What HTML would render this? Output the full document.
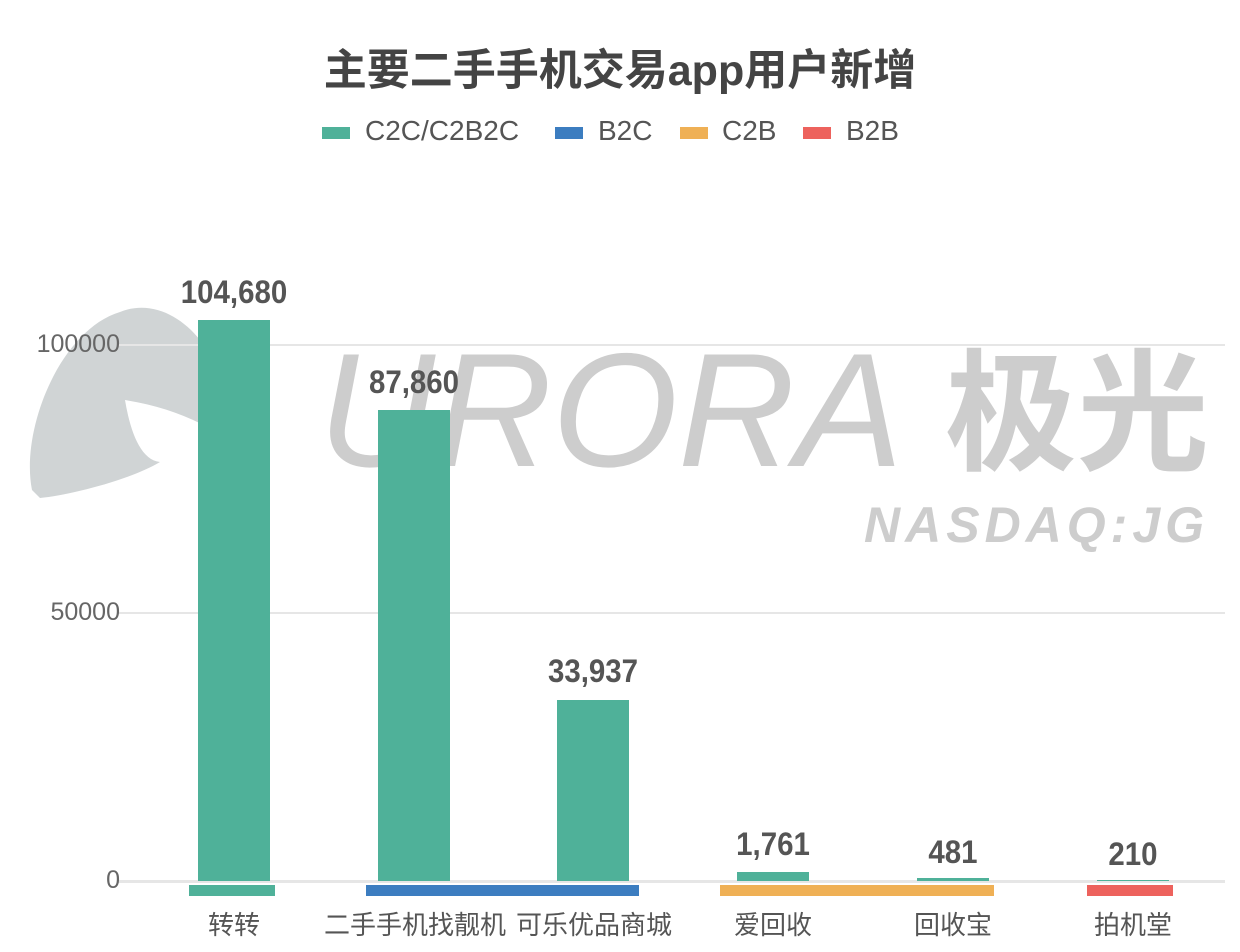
<!DOCTYPE html>
<html><head><meta charset="utf-8"><style>
body{margin:0;width:1240px;height:952px;background:#fff;position:relative;overflow:hidden;font-family:"Liberation Sans","Noto Sans CJK SC",sans-serif}
.a{position:absolute}
.bar{position:absolute;background:#4fb199;width:72px}
.v{position:absolute;width:160px;text-align:center;font-weight:bold;font-size:32px;color:#555;transform:scaleX(0.92)}
.yl{position:absolute;right:1120px;font-size:25px;color:#666}
.g{position:absolute;left:118px;width:1107px;height:2px;background:#e6e6e6}
.cl{position:absolute;top:905px;font-size:26px;color:#555;width:220px;text-align:center}
.sw{position:absolute;top:127px;width:28px;height:12px}
.lt{position:absolute;top:115px;font-size:28px;color:#555}
</style></head><body>
<svg class="a" style="left:0;top:0" width="1240" height="952">
<path d="M32 490 C20 430 60 330 120 312 C150 300 180 315 200 340 C225 370 250 410 268 470 L268 480 C240 440 190 410 125 400 C130 430 140 460 160 462 C130 480 70 495 40 498 Z" fill="#d0d4d5"/>
</svg>
<div class="a" style="left:318px;top:330px;font-size:162px;font-style:italic;color:#cdcdcd;line-height:1;font-family:'Liberation Sans',sans-serif">URORA</div>
<div class="a" style="left:945px;top:338px;font-size:132px;color:#cdcdcd;line-height:1;font-family:'Noto Sans CJK SC',sans-serif;font-weight:bold">极光</div>
<div class="a" style="left:864px;top:500px;font-size:50px;font-style:italic;font-weight:bold;color:#cdcdcd;letter-spacing:5px;line-height:1">NASDAQ:JG</div>
<div class="a" style="left:0;width:1240px;top:36px;text-align:center;font-size:43px;font-weight:bold;color:#444">主要二手手机交易app用户新增</div>
<div class="sw" style="left:322px;background:#4fb199"></div><div class="lt" style="left:365px">C2C/C2B2C</div>
<div class="sw" style="left:555px;background:#3c7dc0"></div><div class="lt" style="left:598px">B2C</div>
<div class="sw" style="left:680px;background:#efb055"></div><div class="lt" style="left:722px">C2B</div>
<div class="sw" style="left:803px;background:#ed625d"></div><div class="lt" style="left:846px">B2B</div>
<div class="g" style="top:344px"></div>
<div class="g" style="top:612px"></div>
<div class="g" style="top:880px;height:3px"></div>
<div class="yl" style="top:330px">100000</div>
<div class="yl" style="top:598px">50000</div>
<div class="yl" style="top:866px">0</div>
<div class="bar" style="left:198px;top:320px;height:561px"></div>
<div class="bar" style="left:378px;top:410px;height:471px"></div>
<div class="bar" style="left:557px;top:700px;height:181px"></div>
<div class="bar" style="left:737px;top:872px;height:9px"></div>
<div class="bar" style="left:917px;top:878px;height:3px"></div>
<div class="bar" style="left:1097px;top:880px;height:1px"></div>
<div class="v" style="left:154px;top:274px">104,680</div>
<div class="v" style="left:334px;top:364px">87,860</div>
<div class="v" style="left:513px;top:653px">33,937</div>
<div class="v" style="left:693px;top:826px">1,761</div>
<div class="v" style="left:873px;top:834px">481</div>
<div class="v" style="left:1053px;top:836px">210</div>
<div class="a" style="left:189px;top:885px;width:86px;height:11px;background:#4fb199"></div>
<div class="a" style="left:366px;top:885px;width:273px;height:11px;background:#3c7dc0"></div>
<div class="a" style="left:720px;top:885px;width:274px;height:11px;background:#efb055"></div>
<div class="a" style="left:1087px;top:885px;width:86px;height:11px;background:#ed625d"></div>
<div class="cl" style="left:124px">转转</div>
<div class="cl" style="left:305px">二手手机找靓机</div>
<div class="cl" style="left:484px">可乐优品商城</div>
<div class="cl" style="left:663px">爱回收</div>
<div class="cl" style="left:843px">回收宝</div>
<div class="cl" style="left:1023px">拍机堂</div>
</body></html>
